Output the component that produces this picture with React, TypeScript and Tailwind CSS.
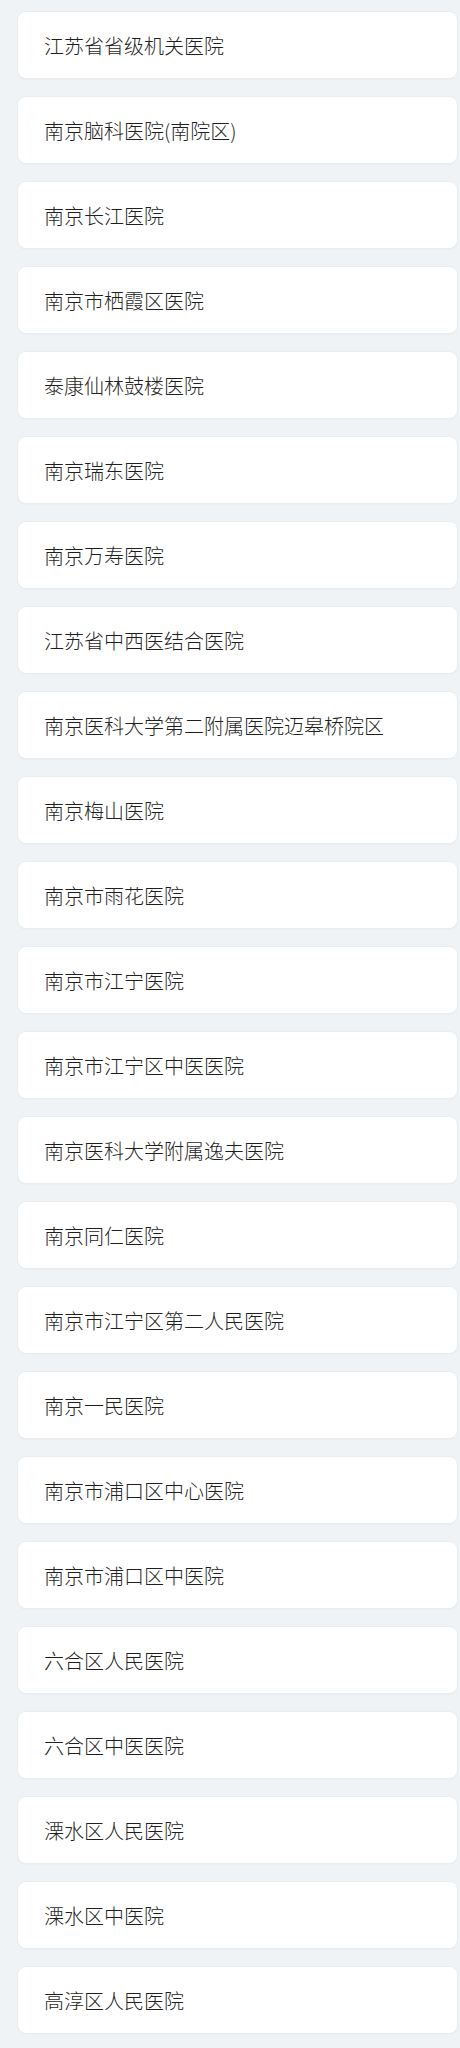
const hospitals = [
  '江苏省省级机关医院',
  '南京脑科医院(南院区)',
  '南京长江医院',
  '南京市栖霞区医院',
  '泰康仙林鼓楼医院',
  '南京瑞东医院',
  '南京万寿医院',
  '江苏省中西医结合医院',
  '南京医科大学第二附属医院迈皋桥院区',
  '南京梅山医院',
  '南京市雨花医院',
  '南京市江宁医院',
  '南京市江宁区中医医院',
  '南京医科大学附属逸夫医院',
  '南京同仁医院',
  '南京市江宁区第二人民医院',
  '南京一民医院',
  '南京市浦口区中心医院',
  '南京市浦口区中医院',
  '六合区人民医院',
  '六合区中医医院',
  '溧水区人民医院',
  '溧水区中医院',
  '高淳区人民医院',
];

export default function App() {
  return (
    <div
      className="min-h-[2048px] bg-[#eff3f6] pt-[12px] pl-[18px] pr-[3px]"
      style={{ fontFamily: '"Noto Sans CJK SC", "Noto Sans", sans-serif' }}
    >
      <ul className="flex flex-col gap-[19px]">
        {hospitals.map((name) => (
          <li
            key={name}
            className="flex h-[66px] items-center rounded-[8px] bg-white px-[26px] pt-[2px] text-[20px] font-light text-[#1f1f1f] shadow-[0_1px_2px_rgba(0,0,0,0.06)] ring-1 ring-[#e8edf1]"
          >
            {name}
          </li>
        ))}
      </ul>
    </div>
  );
}
